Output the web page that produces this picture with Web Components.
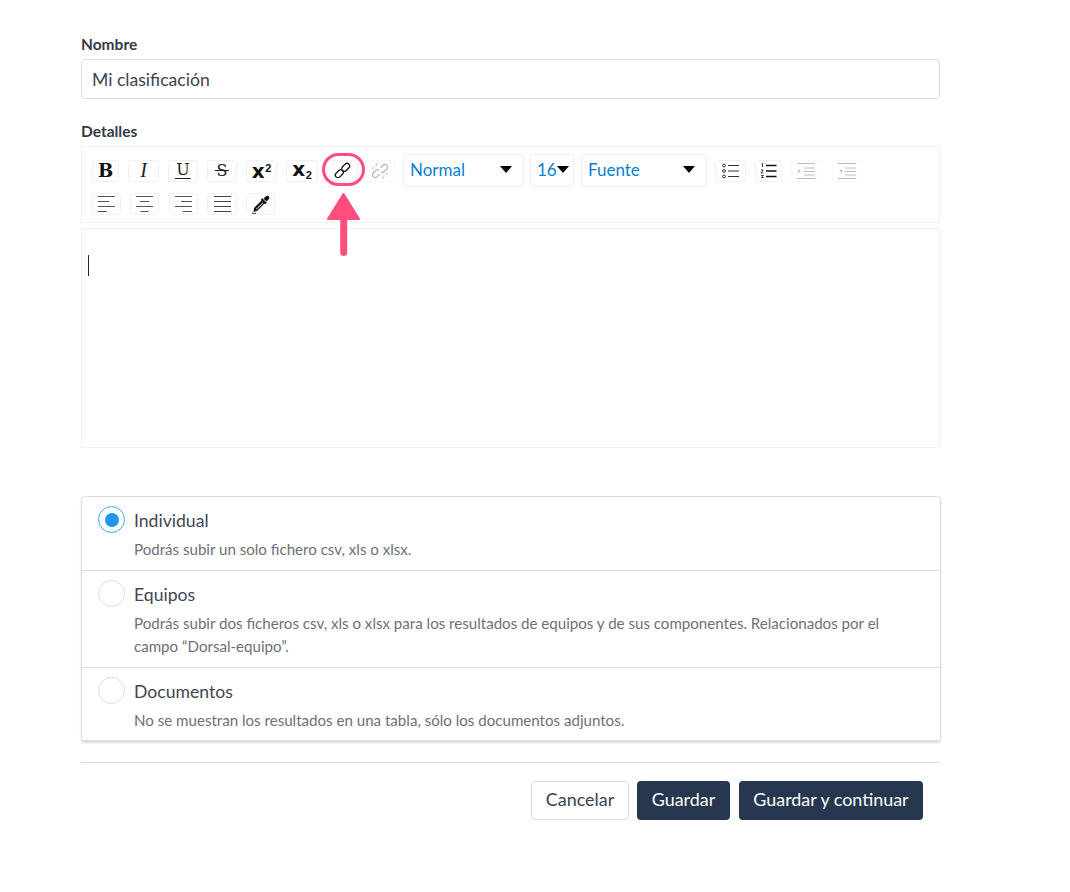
<!DOCTYPE html>
<html lang="es">
<head>
<meta charset="utf-8">
<title>Clasificación</title>
<style>
  html, body { margin: 0; background: #fff; }
  body { font-family: Lato, "Open Sans", sans-serif; color: #3b4250; }
  clas-form { margin-left: 81px; }
</style>
</head>
<body>

<template id="tpl-field">
  <style>
    :host { display: block; }
    label { display: block; font-size: 15.5px; font-weight: 700; line-height: 17px; color: #333a47; margin-bottom: 6px; }
  </style>
  <label><slot name="label"></slot></label>
  <slot></slot>
</template>

<template id="tpl-input">
  <style>
    :host { display: block; box-sizing: border-box; height: 40px; border: 1px solid #dedede; border-radius: 4px; padding: 0 10px; font-size: 17.6px; line-height: 40px; color: #3b4250; }
  </style>
  <slot></slot>
</template>

<template id="tpl-button">
  <style>
    :host { display: flex; align-items: center; justify-content: center; box-sizing: border-box; height: 22px; border: 1px solid #f1f1f1; border-radius: 3px; background: #fff; color: #111; flex: none; }
    :host([off]) { color: #bbb; border-color: #f8f8f8; }
  </style>
  <slot></slot>
</template>

<template id="tpl-select">
  <style>
    :host { display: flex; align-items: center; box-sizing: border-box; height: 33px; border: 1px solid #eee; border-radius: 3px; background: #fff; padding: 0 6px 2px; font-size: 17px; color: #0a7fd6; flex: none; justify-content: space-between; }
    i { width: 0; height: 0; border-left: 6px solid transparent; border-right: 6px solid transparent; border-top: 7px solid #000; margin: 0 5px 0 0; }
    :host([tight]) i { margin-right: 0; }
  </style>
  <slot></slot><i></i>
</template>

<template id="tpl-radio">
  <style>
    :host { display: block; box-sizing: border-box; padding: 9px 16px 0; border-bottom: 1px solid #ddd; }
    :host(:last-child) { border-bottom: 0; }
    .head { display: flex; align-items: center; gap: 9px; height: 27px; font-size: 17.6px; color: #3f4654; }
    ::slotted([slot="title"]) { margin-top: 2px; }
    .dot { box-sizing: border-box; width: 27px; height: 27px; border-radius: 50%; border: 1px solid #dcdcdc; background: #fff; display: flex; align-items: center; justify-content: center; flex: none; }
    :host([checked]) .dot { border-color: #29b0ee; border-width: 1.5px; }
    :host([checked]) .dot::after { content: ""; width: 14px; height: 14px; border-radius: 50%; background: #2196ee; }
    .desc { margin: 5px 0 0 36px; max-width: 775px; font-size: 15.1px; line-height: 23px; color: #6e7176; }
  </style>
  <div class="head"><span class="dot"></span><slot name="title"></slot></div>
  <div class="desc"><slot></slot></div>
</template>

<template id="tpl-action">
  <style>
    :host { display: flex; align-items: center; justify-content: center; box-sizing: border-box; height: 39px; border-radius: 4px; font-size: 17.9px; padding-bottom: 3px; background: #27374f; color: #fff; flex: none; }
    :host([plain]) { background: #fff; color: #3b4250; border: 1px solid #dedede; }
  </style>
  <slot></slot>
</template>

<template id="tpl-callout">
  <style>
    :host { display: block; position: absolute; left: 322px; top: 153px; width: 43px; height: 104px; pointer-events: none; }
    svg { display: block; }
  </style>
  <svg width="43" height="104" viewBox="0 0 43 104" fill="none">
    <rect x="1.5" y="1.5" width="40" height="30" rx="15" stroke="#ff4d7d" stroke-width="3"/>
    <path d="M21.500 41 L37 66 H6 Z" fill="#ff4d7d" stroke="#ff4d7d" stroke-width="2" stroke-linejoin="round"/>
    <path d="M21.700 62 V99.500" stroke="#ff4d7d" stroke-width="7" stroke-linecap="round"/>
  </svg>
</template>

<template id="tpl-form">
  <style>
    :host { display: block; width: 859px; padding-top: 36px; }
    .editor { box-sizing: border-box; height: 220px; margin-top: 5px; border: 1px solid #f1f1f1; padding: 26px 6px; }
    .caret { display: block; width: 1px; height: 21px; background: #222; }
    .options { box-sizing: border-box; width: 860px; height: 246px; margin-top: 48px; border: 1px solid #ddd; border-radius: 4px; box-shadow: 0 1px 2px rgba(0,0,0,.16); }
    hr { border: 0; border-top: 1px solid #ddd; margin: 20px 0 18px; }
    .actions { display: flex; justify-content: flex-end; padding-right: 17px; }
    .gap { height: 24px; }
  </style>
  <clas-field>
    <span slot="label">Nombre</span>
    <clas-input>Mi clasificación</clas-input>
  </clas-field>
  <div class="gap"></div>
  <clas-field>
    <span slot="label">Detalles</span>
    <slot name="toolbar"></slot>
    <div class="editor"><span class="caret"></span></div>
  </clas-field>
  <div class="options"><slot name="options"></slot></div>
  <hr>
  <div class="actions"><slot name="actions"></slot></div>
</template>

<template id="tpl-tools">
  <style>
    :host { display: block; box-sizing: border-box; height: 77px; border: 1px solid #f1f1f1; padding: 7px 0 0 10px; }
    .row { display: flex; align-items: center; height: 33px; }
    .row + .row { height: 22px; margin-top: 6px; }
    .sans { font-family: "DejaVu Sans", sans-serif; font-weight: 700; font-size: 20px; line-height: 1; display: block; margin-top: -4px; letter-spacing: .5px; }
    sup, sub { font-family: "Liberation Sans", sans-serif; font-size: 11px; line-height: 0; letter-spacing: 0; }
    sub { vertical-align: -3px; }
    sup { vertical-align: 6px; }
    .wide { font: 16px "DejaVu Serif", serif; line-height: 1; padding: 0 1px; color: #222; }
    .strike { background: linear-gradient(#222, #222) center / 100% 1px no-repeat; }
    .under { background: linear-gradient(#222, #222) bottom / 100% 1px no-repeat; padding-bottom: 1px; }
    svg { display: block; }
    tool-button, tool-select { margin-right: var(--g, 9px); }
  </style>
  <div class="row">
    <tool-button style="width:27px;--g:9px"><span style="font:900 18px 'DejaVu Serif',serif">B</span></tool-button>
    <tool-button style="width:31px;--g:9px"><span style="font:italic 20px 'Liberation Serif',serif;color:#222">I</span></tool-button>
    <tool-button style="width:30px;--g:9px"><span class="wide under">U</span></tool-button>
    <tool-button style="width:30px;--g:9px"><span class="wide strike" style="padding:0 2px">S</span></tool-button>
    <tool-button style="width:31px;--g:9px"><span class="sans" style="margin-top:0">x<sup>2</sup></span></tool-button>
    <tool-button style="width:32px;--g:8px"><span class="sans">x<sub>2</sub></span></tool-button>
    <tool-button style="width:32px;--g:7px">
      <svg width="17" height="17" viewBox="0 0 17 17" fill="none" stroke="#111" stroke-width="1.3">
        <rect x="7.2" y="2.700" width="9" height="5.200" rx="2.600" transform="rotate(-45 11.700 5.300)"/>
        <rect x="0.800" y="9.100" width="9" height="5.200" rx="2.600" transform="rotate(-45 5.300 11.700)"/>
      </svg>
    </tool-button>
    <tool-button off style="width:30px;--g:8px">
      <svg width="18" height="18" viewBox="0 0 18 18" fill="none" stroke="#b5b5b5" stroke-width="1.2">
        <path d="M9.500 6 L12 3.200 a2.700 2.700 0 0 1 3.800 3.800 L13 9.700 a2.700 2.700 0 0 1 -3.200 .3"/>
        <path d="M8.500 12 L6 14.800 a2.700 2.700 0 0 1 -3.800 -3.800 L5 8.300 a2.700 2.700 0 0 1 3.200 -.3"/>
        <path d="M6 1v2.500M1 6h2.500M4 3.500l1 1M12 17v-2.500M17 12h-2.500M14 14.500l-1-1" stroke-width="1"/>
      </svg>
    </tool-button>
    <tool-select style="width:121px;--g:6px">Normal</tool-select>
    <tool-select tight style="width:44px;--g:7px">16</tool-select>
    <tool-select style="width:126px;--g:8px">Fuente</tool-select>
    <tool-button style="width:31px;--g:9px">
      <svg width="18" height="16" viewBox="0 0 18 16" fill="none" stroke="#333">
        <circle cx="2" cy="2.500" r="1.400"/><circle cx="2" cy="8" r="1.400"/><circle cx="2" cy="13.500" r="1.400"/>
        <path d="M6 2.500H17M6 8H17M6 13.500H17" stroke-width="1.200"/>
      </svg>
    </tool-button>
    <tool-button style="width:27px;--g:9px">
      <svg width="17" height="16" viewBox="0 0 17 16" fill="none" stroke="#111">
        <path d="M1.500 1l1-.5V4M1 7h2.200L1 10h2.400M1 12.500h2.400l-1 1 1 1H1" stroke-width=".8"/>
        <path d="M6 2.500H16.500M6 8H16.500M6 13.500H16.500" stroke-width="1.500"/>
      </svg>
    </tool-button>
    <tool-button off style="width:31px;--g:10px">
      <svg width="19" height="16" viewBox="0 0 19 16" fill="none" stroke="#bdbdbd" stroke-width="1">
        <path d="M0 .5H18M7 5H18M7 8.500H18M7 12H18M0 15.500H18"/><path d="M1 6v4l3-2z" fill="#c4c4c4" stroke="none"/>
      </svg>
    </tool-button>
    <tool-button off style="width:30px;--g:0">
      <svg width="19" height="16" viewBox="0 0 19 16" fill="none" stroke="#bdbdbd" stroke-width="1">
        <path d="M0 .5H18M7 5H18M7 8.500H18M7 12H18M0 15.500H18"/><path d="M4 6v4l-3-2z" fill="#c4c4c4" stroke="none"/>
      </svg>
    </tool-button>
  </div>
  <div class="row">
    <tool-button style="width:29px;--g:9px"><svg width="17" height="18" viewBox="0 0 17 18" stroke="#555" stroke-width="1.100"><path d="M0 1.500H17M0 6.500H11M0 11.500H17M0 16.500H9"/></svg></tool-button>
    <tool-button style="width:29px;--g:10px"><svg width="17" height="18" viewBox="0 0 17 18" stroke="#555" stroke-width="1.100"><path d="M0 1.500H17M4 6.500H13M0 11.500H17M4.500 16.500H12.500"/></svg></tool-button>
    <tool-button style="width:29px;--g:9px"><svg width="17" height="18" viewBox="0 0 17 18" stroke="#555" stroke-width="1.100"><path d="M0 1.500H17M6 6.500H17M0 11.500H17M8 16.500H17"/></svg></tool-button>
    <tool-button style="width:30px;--g:9px"><svg width="17" height="18" viewBox="0 0 17 18" stroke="#444" stroke-width="1.100"><path d="M0 1.500H17M0 6.500H17M0 11.500H17M0 16.500H17"/></svg></tool-button>
    <tool-button style="width:29px;--g:0">
      <svg width="19" height="19" viewBox="0 0 19 19">
        <path d="M11 3 L16 8 L14 9 L10 5 Z" fill="#111"/>
        <path d="M12.500 3.500 L15 1.200 Q16.500 0 18 1.500 Q19 3 17.500 4.500 L15.500 6.500 Z" fill="#111"/>
        <path d="M11.500 4.500 L14.500 7.500 L6 16 L2.500 17 L3 13 Z" fill="#111"/>
        <path d="M11.800 7.500 L12.300 8 L5.500 14.500 L5 14 Z" fill="#fff"/>
        <path d="M1 18.300 H5" stroke="#333" stroke-width="1"/>
      </svg>
    </tool-button>
  </div>
</template>

<clas-form>
  <clas-tools slot="toolbar"></clas-tools>
  <clas-radio slot="options" checked style="height:74px">
    <span slot="title">Individual</span>
    Podrás subir un solo fichero csv, xls o xlsx.
  </clas-radio>
  <clas-radio slot="options" style="height:97px">
    <span slot="title">Equipos</span>
    Podrás subir dos ficheros csv, xls o xlsx para los resultados de equipos y de sus componentes. Relacionados por el campo “Dorsal-equipo”.
  </clas-radio>
  <clas-radio slot="options" style="height:73px">
    <span slot="title">Documentos</span>
    No se muestran los resultados en una tabla, sólo los documentos adjuntos.
  </clas-radio>
  <clas-action slot="actions" plain style="width:98px;margin-right:8px">Cancelar</clas-action>
  <clas-action slot="actions" style="width:93px;margin-right:9px">Guardar</clas-action>
  <clas-action slot="actions" style="width:184px">Guardar y continuar</clas-action>
</clas-form>
<clas-callout></clas-callout>

<script>
  // each element just stamps its template into an open shadow root
  const define = (name, tplId) => {
    customElements.define(name, class extends HTMLElement {
      constructor() {
        super()
        this.attachShadow({ mode: 'open' })
        this.shadowRoot.appendChild(document.getElementById(tplId).content.cloneNode(true))
      }
    })
  }

  define('clas-field', 'tpl-field')
  define('clas-input', 'tpl-input')
  define('tool-button', 'tpl-button')
  define('tool-select', 'tpl-select')
  define('clas-tools', 'tpl-tools')
  define('clas-radio', 'tpl-radio')
  define('clas-action', 'tpl-action')
  define('clas-callout', 'tpl-callout')
  define('clas-form', 'tpl-form')
</script>
</body>
</html>
